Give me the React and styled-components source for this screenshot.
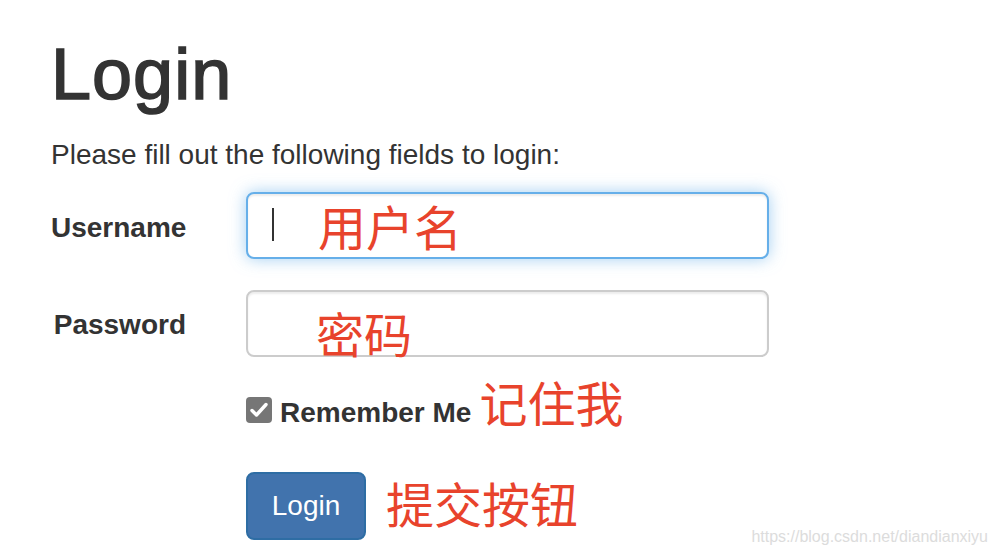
import React from 'react';
import styled, { createGlobalStyle } from 'styled-components';

const GlobalStyle = createGlobalStyle`
  body {
    margin: 0;
    background: #fff;
    color: #333;
    font-family: "Liberation Sans", Arial, sans-serif;
  }
`;

const Page = styled.div`
  position: relative;
  height: 556px;
  overflow: hidden;
  padding: 35px 0 0 51px;
  box-sizing: border-box;
`;

const Title = styled.h1`
  margin: 0;
  font-size: 72px;
  font-weight: 400;
  line-height: 1.1;
  letter-spacing: 1px;
  -webkit-text-stroke: 1.6px #333;
`;

const Intro = styled.p`
  margin: 21px 0 0;
  font-size: 28px;
  line-height: 40px;
`;

const Form = styled.form`
  margin-top: 17px;
  display: flex;
  flex-direction: column;
`;

const Row = styled.div`
  display: flex;
  align-items: flex-start;
  margin-bottom: ${p => p.gap || 31}px;
`;

const Label = styled.label`
  width: 135px;
  padding-top: ${p => p.top || 14}px;
  text-align: right;
  font-size: 28px;
  font-weight: bold;
  line-height: 40px;
`;

const Field = styled.div`
  margin-left: 60px;
  width: 523px;
  height: 67px;
  box-sizing: border-box;
  border: 2px solid ${p => (p.focused ? '#66afe9' : '#ccc')};
  border-radius: 8px;
  background: #fff;
  box-shadow: ${p =>
    p.focused
      ? 'inset 0 2px 2px rgba(0,0,0,.075), 0 0 16px rgba(102,175,233,.6)'
      : 'inset 0 2px 2px rgba(0,0,0,.075)'};
  padding-left: 24px;
  display: flex;
  align-items: center;
`;

const Caret = styled.span`
  width: 2px;
  height: 33px;
  background: #333;
  margin-top: -2px;
`;

const Note = styled.span`
  color: #e8432c;
  font-family: "Noto Sans CJK SC", "Liberation Sans", sans-serif;
  font-size: 48px;
  font-weight: 400;
  line-height: 1;
  margin-left: ${p => p.left || 0}px;
  position: relative;
  top: ${p => p.down || 0}px;
`;

const Offset = styled.div`
  margin-left: 195px;
  display: flex;
  align-items: ${p => p.align || 'baseline'};
  margin-bottom: ${p => p.gap || 0}px;
`;

const Box = styled.span`
  display: inline-flex;
  align-items: center;
  justify-content: center;
  width: 26px;
  height: 26px;
  border-radius: 4px;
  background: #767676;
  align-self: baseline;
  position: relative;
  top: -4px;
`;

const CheckText = styled.span`
  margin-left: 8px;
  font-size: 28px;
  font-weight: bold;
  line-height: 40px;
`;

const Button = styled.button`
  width: 120px;
  height: 68px;
  box-sizing: border-box;
  border: 2px solid #2e6da4;
  border-radius: 8px;
  background: #4173ad;
  color: #fff;
  font-family: "Liberation Sans", Arial, sans-serif;
  font-size: 28px;
  line-height: 40px;
  padding: 0;
`;

const Watermark = styled.div`
  position: absolute;
  right: 8px;
  bottom: 10px;
  font-size: 16px;
  color: #dcdcdc;
`;

export default function App() {
  return (
    <Page>
      <GlobalStyle />
      <Title>Login</Title>
      <Intro>Please fill out the following fields to login:</Intro>
      <Form onSubmit={e => e.preventDefault()}>
        <Row>
          <Label top={16}>Username</Label>
          <Field focused>
            <Caret />
            <Note left={44} down={-1}>用户名</Note>
          </Field>
        </Row>
        <Row gap={20}>
          <Label top={15}>Password</Label>
          <Field>
            <Note left={44} down={8}>密码</Note>
          </Field>
        </Row>
        <Offset gap={39}>
          <Box>
            <svg width="18" height="16" viewBox="0 0 18 16">
              <path d="M2 8.5 L6.5 13 L16 2.5" fill="none" stroke="#fff" strokeWidth="3.4" strokeLinecap="round" strokeLinejoin="round" />
            </svg>
          </Box>
          <CheckText>Remember Me</CheckText>
          <Note left={8}>记住我</Note>
        </Offset>
        <Offset align="center">
          <Button type="submit">Login</Button>
          <Note left={20} down={-4}>提交按钮</Note>
        </Offset>
      </Form>
      <Watermark>https://blog.csdn.net/diandianxiyu</Watermark>
    </Page>
  );
}
